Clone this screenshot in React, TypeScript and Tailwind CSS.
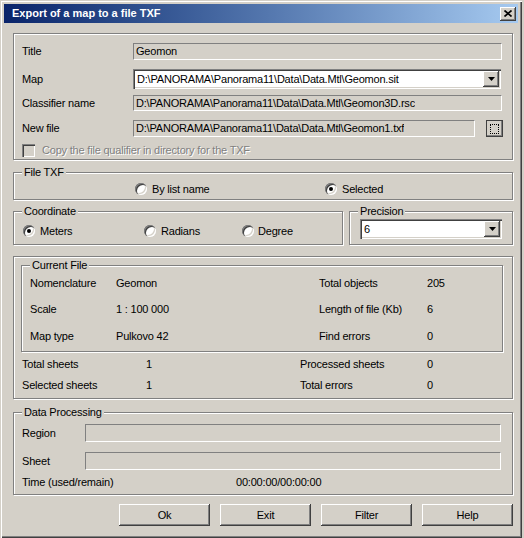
import type { ReactNode } from 'react'

// Win2000-style bevels
const sunken2 =
  'shadow-[inset_1px_1px_0_#808080,inset_2px_2px_0_#404040,inset_-1px_-1px_0_#ffffff,inset_-2px_-2px_0_#d4d0c8]'
const raised =
  'shadow-[inset_-1px_-1px_0_#404040,inset_1px_1px_0_#ffffff,inset_-2px_-2px_0_#808080,inset_2px_2px_0_#d4d0c8]'
const staticEdge = 'border border-t-[#808080] border-l-[#808080] border-b-white border-r-white'

function Group({ label, className, children }: { label?: string; className: string; children?: ReactNode }) {
  return (
    <div
      className={`relative border border-[#808080] shadow-[1px_1px_0_#ffffff,inset_1px_1px_0_#ffffff] ${className}`}
    >
      {label && (
        <span className="absolute -top-[7px] left-[8px] bg-[#d4d0c8] px-[2px] leading-[13px]">{label}</span>
      )}
      {children}
    </div>
  )
}

function Radio({ checked }: { checked?: boolean }) {
  return (
    <span
      className={`flex h-[12px] w-[12px] shrink-0 items-center justify-center rounded-full bg-white ${sunken2}`}
    >
      {checked && <span className="h-[4px] w-[4px] rounded-full bg-black" />}
    </span>
  )
}

function ArrowButton() {
  return (
    <span className={`flex h-[16px] w-[16px] items-center justify-center bg-[#d4d0c8] ${raised}`}>
      <svg width="7" height="4" viewBox="0 0 7 4">
        <path d="M0 0h7L3.5 4z" fill="#000" />
      </svg>
    </span>
  )
}

function Combo({ value, className }: { value: string; className: string }) {
  return (
    <div className={`flex items-center bg-white pl-[4px] pr-[2px] ${sunken2} ${className}`}>
      <span className="flex-1 truncate">{value}</span>
      <ArrowButton />
    </div>
  )
}

function Field({ value, className }: { value?: string; className: string }) {
  return (
    <div className={`flex items-center bg-[#d4d0c8] pl-[2px] ${staticEdge} ${className}`}>
      <span className="truncate">{value}</span>
    </div>
  )
}

function DlgButton({ label }: { label: string }) {
  return (
    <button className={`flex h-[22px] w-[91px] items-center justify-center bg-[#d4d0c8] ${raised}`}>
      {label}
    </button>
  )
}

export default function App() {
  return (
    <div className="h-[538px] w-[524px] bg-[#d4d0c8] font-['Liberation_Sans',Arial,sans-serif] text-[11px] tracking-[-0.2px] text-black">
      <div className="flex h-[538px] w-[522px] flex-col p-[4px] shadow-[inset_1px_1px_0_#d4d0c8,inset_2px_2px_0_#ffffff,inset_-1px_-1px_0_#404040,inset_-2px_-2px_0_#808080]">
        {/* Title bar */}
        <div className="flex h-[19px] items-center bg-linear-to-r from-[#0a246a] to-[#a6caf0] pl-[8px] pr-[2px]">
          <span className="flex-1 text-[11px] font-bold tracking-normal text-white">Export of a map to a file TXF</span>
          <span className={`flex h-[14px] w-[16px] items-center justify-center bg-[#d4d0c8] ${raised}`}>
            <svg width="8" height="7" viewBox="0 0 8 7">
              <path d="M0.5 0.5L7.5 6.5M7.5 0.5L0.5 6.5" stroke="#000" strokeWidth="1.7" />
            </svg>
          </span>
        </div>

        <div className="flex w-[500px] flex-col pl-[9px] box-content">
          {/* Source / target */}
          <Group className="mt-[10px] h-[127px] pl-[8px] pt-[9px]">
            <div className="flex h-[17px] items-center">
              <span className="w-[111px]">Title</span>
              <Field value="Geomon" className="h-[17px] w-[369px]" />
            </div>
            <div className="mt-[9px] flex h-[20px] items-center">
              <span className="w-[111px]">Map</span>
              <Combo value="D:\PANORAMA\Panorama11\Data\Data.Mtl\Geomon.sit" className="h-[20px] w-[368px]" />
            </div>
            <div className="mt-[6px] flex h-[16px] items-center">
              <span className="w-[111px]">Classifier name</span>
              <Field value="D:\PANORAMA\Panorama11\Data\Data.Mtl\Geomon3D.rsc" className="h-[16px] w-[369px]" />
            </div>
            <div className="mt-[9px] flex h-[17px] items-center">
              <span className="w-[111px]">New file</span>
              <Field value="D:\PANORAMA\Panorama11\Data\Data.Mtl\Geomon1.txf" className="h-[17px] w-[342px]" />
              <span
                className={`ml-[11px] flex h-[17px] w-[17px] items-center justify-center bg-[#d4d0c8] ${raised} outline outline-1 outline-[#404040] -outline-offset-1`}
              >
                <span className="h-[10px] w-[9px] border border-dotted border-black" />
              </span>
            </div>
            <div className="mt-[7px] flex h-[13px] items-center">
              <span className={`h-[13px] w-[13px] bg-[#d4d0c8] ${sunken2}`} />
              <span className="ml-[7px] text-[#808080] [text-shadow:1px_1px_0_#ffffff]">
                Copy the file qualifier in directory for the TXF
              </span>
            </div>
          </Group>

          {/* File TXF */}
          <Group label="File TXF" className="mt-[12px] flex h-[28px] items-start pl-[121px] pt-[8px]">
            <div className="flex w-[190px] items-center gap-[5px]">
              <Radio />
              <span>By list name</span>
            </div>
            <div className="flex items-center gap-[5px]">
              <Radio checked />
              <span>Selected</span>
            </div>
          </Group>

          {/* Coordinate + Precision */}
          <div className="mt-[11px] flex">
            <Group label="Coordinate" className="flex h-[34px] w-[330px] items-start pl-[9px] pt-[11px]">
              <div className="flex w-[121px] items-center gap-[5px]">
                <Radio checked />
                <span>Meters</span>
              </div>
              <div className="flex w-[98px] items-center gap-[5px]">
                <Radio />
                <span>Radians</span>
              </div>
              <div className="flex items-center gap-[4px]">
                <Radio />
                <span>Degree</span>
              </div>
            </Group>
            <Group label="Precision" className="ml-[6px] h-[34px] flex-1 pl-[10px] pt-[7px]">
              <Combo value="6" className="h-[20px] w-[142px]" />
            </Group>
          </div>

          {/* Current file */}
          <Group className="mt-[11px] h-[143px]">
            <Group label="Current File" className="ml-[7px] mt-[8px] h-[87px] w-[482px] pl-[8px] pt-[10px]">
              <div className="flex h-[14px] items-center">
                <span className="w-[86px]">Nomenclature</span>
                <span className="w-[203px]">Geomon</span>
                <span className="w-[108px]">Total objects</span>
                <span>205</span>
              </div>
              <div className="mt-[12px] flex h-[14px] items-center">
                <span className="w-[86px]">Scale</span>
                <span className="w-[203px]">1 : 100 000</span>
                <span className="w-[108px]">Length of file (Kb)</span>
                <span>6</span>
              </div>
              <div className="mt-[13px] flex h-[14px] items-center">
                <span className="w-[86px]">Map type</span>
                <span className="w-[203px]">Pulkovo 42</span>
                <span className="w-[108px]">Find errors</span>
                <span>0</span>
              </div>
            </Group>
            <div className="mt-[5px] flex h-[14px] items-center pl-[8px]">
              <span className="w-[124px]">Total sheets</span>
              <span className="w-[154px]">1</span>
              <span className="w-[127px]">Processed sheets</span>
              <span>0</span>
            </div>
            <div className="mt-[7px] flex h-[14px] items-center pl-[8px]">
              <span className="w-[124px]">Selected sheets</span>
              <span className="w-[154px]">1</span>
              <span className="w-[127px]">Total errors</span>
              <span>0</span>
            </div>
          </Group>

          {/* Data processing */}
          <Group label="Data Processing" className="mt-[13px] h-[83px] pl-[8px] pt-[11px]">
            <div className="flex h-[18px] items-center">
              <span className="w-[63px]">Region</span>
              <Field className="h-[18px] w-[416px]" />
            </div>
            <div className="mt-[10px] flex h-[18px] items-center">
              <span className="w-[63px]">Sheet</span>
              <Field className="h-[18px] w-[416px]" />
            </div>
            <div className="mt-[5px] flex h-[14px] items-center">
              <span className="w-[214px]">Time (used/remain)</span>
              <span>00:00:00/00:00:00</span>
            </div>
          </Group>

          {/* Buttons */}
          <div className="mt-[9px] flex justify-end gap-[10px]">
            <DlgButton label="Ok" />
            <DlgButton label="Exit" />
            <DlgButton label="Filter" />
            <DlgButton label="Help" />
          </div>
        </div>
      </div>
    </div>
  )
}
